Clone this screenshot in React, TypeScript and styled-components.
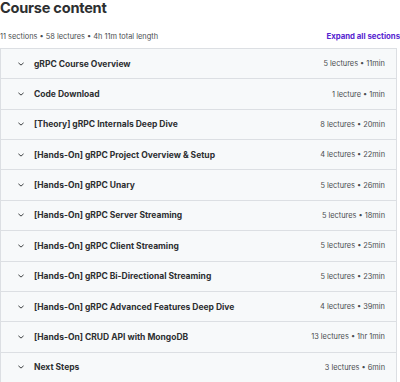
import React from "react";
import styled, { createGlobalStyle } from "styled-components";

const sections = [
  { title: "gRPC Course Overview", meta: "5 lectures • 11min" },
  { title: "Code Download", meta: "1 lecture • 1min" },
  { title: "[Theory] gRPC Internals Deep Dive", meta: "8 lectures • 20min" },
  { title: "[Hands-On] gRPC Project Overview & Setup", meta: "4 lectures • 22min" },
  { title: "[Hands-On] gRPC Unary", meta: "5 lectures • 26min" },
  { title: "[Hands-On] gRPC Server Streaming", meta: "5 lectures • 18min" },
  { title: "[Hands-On] gRPC Client Streaming", meta: "5 lectures • 25min" },
  { title: "[Hands-On] gRPC Bi-Directional Streaming", meta: "5 lectures • 23min" },
  { title: "[Hands-On] gRPC Advanced Features Deep Dive", meta: "4 lectures • 39min" },
  { title: "[Hands-On] CRUD API with MongoDB", meta: "13 lectures • 1hr 1min" },
  { title: "Next Steps", meta: "3 lectures • 6min" },
];

function App() {
  return (
    <>
      <GlobalStyle />
      <Page>
        <Heading>Course content</Heading>
        <MetaBar>
          <Stats>11 sections • 58 lectures • 4h 11m total length</Stats>
          <ExpandButton>Expand all sections</ExpandButton>
        </MetaBar>
        <SectionList>
          {sections.map((s) => (
            <SectionRow key={s.title}>
              <Chevron viewBox="0 0 10 10">
                <path d="M2.7 4.1 L5 6.1 L7.3 4.1" />
              </Chevron>
              <SectionTitle>{s.title}</SectionTitle>
              <SectionMeta>{s.meta}</SectionMeta>
            </SectionRow>
          ))}
        </SectionList>
      </Page>
    </>
  );
}

export default App;

const GlobalStyle = createGlobalStyle`
  body {
    margin: 0;
    background: #fff;
    font-family: Inter, "Noto Sans", sans-serif;
    color: #2d2f31;
  }
`;

const Page = styled.div`
  width: 400px;
  height: 382px;
  overflow: hidden;
`;

const Heading = styled.h2`
  margin: 0;
  font-size: 14.6px;
  line-height: 17px;
  font-weight: 700;
  letter-spacing: -0.25px;
`;

const MetaBar = styled.div`
  display: flex;
  justify-content: space-between;
  align-items: center;
  margin-top: 13px;
  height: 12px;
`;

const Stats = styled.span`
  font-size: 7.4px;
  color: #4a4d50;
`;

const ExpandButton = styled.span`
  font-size: 7.8px;
  font-weight: 700;
  color: #5624d0;
  white-space: nowrap;
`;

const SectionList = styled.div`
  margin-top: 6px;
  width: 397px;
  border: 1px solid #dcdfe3;
  border-top: none;
  box-sizing: border-box;
`;

const SectionRow = styled.div`
  display: flex;
  align-items: center;
  height: 30.36px;
  box-sizing: border-box;
  border-top: 1px solid #dcdfe3;
  background: #f7f9fa;
  padding: 0 11px 0 15px;
`;

const Chevron = styled.svg`
  width: 10px;
  height: 10px;
  fill: none;
  stroke: #3e4143;
  stroke-width: 1;
  stroke-linecap: round;
  stroke-linejoin: round;
  margin-right: 8px;
`;

const SectionTitle = styled.span`
  flex: 1;
  font-size: 8.5px;
  font-weight: 700;
  white-space: nowrap;
`;

const SectionMeta = styled.span`
  font-size: 7.4px;
  color: #4a4d50;
  white-space: nowrap;
`;
